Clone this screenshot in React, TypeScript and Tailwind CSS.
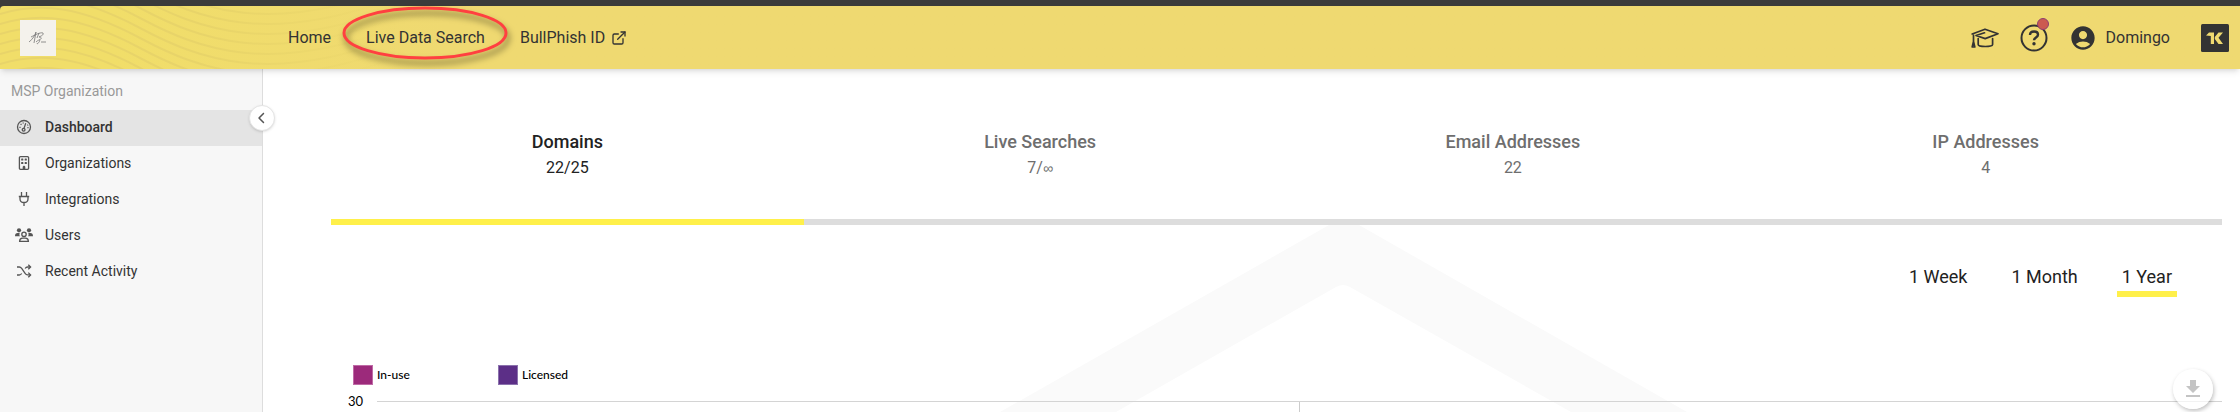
import React, { useState } from "react";
import { FaChevronLeft, FaRegBuilding } from "react-icons/fa6";
import { LuExternalLink } from "react-icons/lu";
import { MdAccountCircle, MdFileDownload } from "react-icons/md";

const waves = [-90, -80, -70, -60, -50, -40, -30, -20, -10, 0, 10, 20, 30, 40, 50, 60, 70, 80];

const DashboardIcon = () => (
	<svg width="16" height="16" viewBox="0 0 16 16" fill="none" stroke="currentColor" strokeWidth="1.3">
		<circle cx="8" cy="8" r="6.5" />
		<circle cx="7.6" cy="10.8" r="1.4" />
		<path d="M8 9.4 9.6 4.6" strokeLinecap="round" />
		<path d="M3.4 8.4h1.2M4.6 5l.9.8M7.2 3.4v1.100M11.400 6.400l.7-.5M11.400 8.600h1.200" />
	</svg>
);

const BuildingIcon = () => <FaRegBuilding className="size-[14px]" />;

const PlugIcon = () => (
	<svg width="16" height="16" viewBox="0 0 16 16" fill="none" stroke="currentColor" strokeWidth="1.3">
		<path d="M5.5 1V5M10.5 1V5M2.800 5.500h10.400M4 5.500V8c0 2.200 1.800 3.500 4 3.500s4-1.300 4-3.500V5.500M8 11.500v3.500" />
	</svg>
);

const UsersIcon = () => (
	<svg width="18" height="16" viewBox="0 0 18 16" fill="currentColor">
		<circle cx="4" cy="3.3" r="2.1" />
		<circle cx="14" cy="3.3" r="2.1" />
		<path d="M0 9.3c0-2 1-3.2 2.6-3.2h2.2c-.6 1.1-.5 2.3.1 3.2H0ZM18 9.3c0-2-1-3.2-2.6-3.2h-2.2c.6 1.1.5 2.3-.1 3.2H18Z" />
		<circle cx="9" cy="7.3" r="2.2" fill="none" stroke="currentColor" strokeWidth="1.3" />
		<path d="M4.6 14.4c0-2 1.2-3.2 3-3.2h2.8c1.8 0 3 1.2 3 3.2H4.6Z" fill="none" stroke="currentColor" strokeWidth="1.3" />
	</svg>
);

const ShuffleIcon = () => (
	<svg width="16" height="16" viewBox="0 0 16 16" fill="none" stroke="currentColor" strokeWidth="1.3">
		<path d="M1 4h2.3c1.2 0 1.7.5 2.4 1.4l3.4 5c.7 1 1.3 1.5 2.4 1.5H14M1 12h2.3c1.2 0 1.7-.5 2.4-1.5M9.1 5.5c.7-1 1.3-1.5 2.4-1.5H14" />
		<path d="m12.3 1.7 2.3 2.3-2.3 2.3M12.3 9.600l2.300 2.300-2.300 2.300" />
	</svg>
);

const GraduationIcon = () => (
	<svg width="28" height="20" viewBox="0 0 28 20" fill="none" stroke="currentColor" strokeWidth="1.7" strokeLinejoin="round" strokeLinecap="round">
		<path d="M1.200 6 14 1.200 27 5.800 14.200 10.600 5 7.500 13.500 4.800" />
		<path d="M7.200 10.500v6c0 1.300 3.200 2 7.200 2s7.200-.7 7.200-2v-6" />
		<path d="M2.500 7v6.500M2.500 13.500 1.200 19h2.600Z" />
	</svg>
);

const menu = [
	{ label: "Dashboard", icon: DashboardIcon },
	{ label: "Organizations", icon: BuildingIcon },
	{ label: "Integrations", icon: PlugIcon },
	{ label: "Users", icon: UsersIcon },
	{ label: "Recent Activity", icon: ShuffleIcon },
];

const stats = [
	{ label: "Domains", value: "22/25" },
	{ label: "Live Searches", value: "7/", unlimited: true },
	{ label: "Email Addresses", value: "22" },
	{ label: "IP Addresses", value: "4" },
];

const ranges = ["1 Week", "1 Month", "1 Year"];

const Header = () => (
	<header className="relative z-20 flex h-[63px] items-center rounded-tl-sm bg-linear-to-r from-[#f1de69] from-5% to-[#efd971] to-20% text-base text-[#333333] shadow-md">
		<svg className="absolute left-0 top-0" width="400" height="63" viewBox="0 0 400 63" fill="none" aria-hidden="true">
			<defs>
				<linearGradient id="wave-fade" gradientUnits="userSpaceOnUse" x1="0" y1="0" x2="400" y2="0">
					<stop offset="0.5" stopColor="#e8d469" />
					<stop offset="1" stopColor="#e8d469" stopOpacity="0" />
				</linearGradient>
			</defs>
			{waves.map((y) => (
				<path
					key={y}
					d={`M0 ${y + 8}C40 ${y - 4} 80 ${y} 140 ${y + 32}S270 ${y + 90} 400 ${y + 40}`}
					stroke="url(#wave-fade)"
					strokeWidth="2"
				/>
			))}
		</svg>
		<a href="#home" aria-label="Organization logo" className="relative ml-5 flex size-9 items-center justify-center bg-[#f4f2ec]">
			<svg width="20" height="16" viewBox="0 0 20 16" fill="none" stroke="#777777" strokeWidth="0.8">
				<path d="M1 12C5 9 7 5 8 2L6 13M3 7c4-2 9-5 12-4 1 2-2 3-4 4 3 0 3 2 0 3M11 3 9 8M8 12c3-3 5-2 3 0-1 2-2 2-2 1M13 12h5" />
			</svg>
		</a>
		<nav className="relative ml-[232px] flex items-center gap-[35px]">
			<a href="#home">Home</a>
			<a href="#search" className="relative">
				Live Data Search
				<svg className="absolute -left-6 -top-5 drop-shadow-[2px_5px_3px_rgba(0,0,0,0.5)]" width="166" height="54" viewBox="0 0 166 54" fill="none" aria-hidden="true">
					<ellipse cx="83" cy="27" rx="81" ry="25" stroke="#ff4040" strokeWidth="3" />
				</svg>
			</a>
			<a href="#bullphish" className="flex items-center gap-1.5">
				BullPhish ID <LuExternalLink className="size-4" />
			</a>
		</nav>
		<div className="ml-auto mr-[11px] flex items-center">
			<button type="button" aria-label="Training">
				<GraduationIcon />
			</button>
			<button type="button" aria-label="Help" className="relative ml-[21px]">
				<svg width="28" height="28" viewBox="0 0 28 28" fill="none" stroke="currentColor" strokeWidth="2">
					<circle cx="14" cy="14" r="12.5" />
					<path d="M10 11c0-2.500 1.700-3.500 4-3.500s4 1.200 4 3.200c0 2.800-4 2.800-4 5.600" strokeWidth="2.400" />
					<circle cx="14" cy="19.8" r="1.700" fill="currentColor" stroke="none" />
				</svg>
				<span className="absolute -right-px -top-1.5 size-3 rounded-full border border-[#8d3f70] bg-[#cc5a50]" />
			</button>
			<button type="button" className="ml-[21px] flex items-center gap-[9px]">
				<MdAccountCircle className="size-7" />
				Domingo
			</button>
			<button type="button" aria-label="Switch module" className="ml-[31px]">
				<svg width="28" height="28" viewBox="0 0 28 28">
					<rect width="28" height="28" rx="1.5" fill="#333333" />
					<path d="M5 11.500 8 8.500h5V20h-3.200v-8ZM13.800 13 17.500 8.500H22L17.500 13.800 22 20h-4.500L13.800 15Z" fill="#f0da70" />
				</svg>
			</button>
		</div>
	</header>
);

const Sidebar = () => (
	<aside className="relative z-10 w-[263px] shrink-0 border-r border-[#dddddd] bg-[#f7f7f7] text-sm text-[#333333]">
		<h2 className="flex h-[41px] items-center px-[11px] pt-0.5 text-[#999999]">MSP Organization</h2>
		<nav>
			{menu.map(({ label, icon: Icon }) => (
				<a
					key={label}
					href="#menu"
					className={`flex h-9 items-center pb-0.5 ${label === "Dashboard" ? "bg-[#e4e4e4] font-medium" : ""}`}
				>
					<span className="ml-[14px] mr-[11px] flex w-5 justify-center text-[#555555]">
						<Icon />
					</span>
					{label}
				</a>
			))}
		</nav>
		<button
			type="button"
			aria-label="Collapse menu"
			className="absolute -right-[13px] top-9 flex size-[26px] items-center justify-center rounded-full border border-[#e4e4e4] bg-white shadow-sm"
		>
			<FaChevronLeft className="size-3 text-[#555555]" />
		</button>
	</aside>
);

const App: React.FC = () => {
	const [range, setRange] = useState("1 Year");

	return (
		<div className="flex h-screen flex-col overflow-hidden bg-white font-[Roboto,sans-serif]">
			<div className="bg-[#3b3b3b] pt-1.5">
				<Header />
			</div>
			<div className="flex min-h-0 flex-1">
				<Sidebar />
				<main className="relative min-w-0 flex-1 overflow-hidden pl-[68px] pr-[18px] pt-[61px]">
					<section className="grid grid-cols-4">
						{stats.map((stat, i) => (
							<div
								key={stat.label}
								className={`flex flex-col items-center ${i === 0 ? "text-[#222222]" : "text-[#6e6e6e]"}`}
							>
								<h3 className="text-lg leading-6 font-medium">{stat.label}</h3>
								<p className="mt-0.5 text-base">
									{stat.value}
									{stat.unlimited && <span className="font-['Liberation_Sans',sans-serif] text-sm leading-none">∞</span>}
								</p>
							</div>
						))}
					</section>
					<div className="mt-[39px] h-1.5 bg-[#dddddd]">
						<div className="h-full w-1/4 bg-[#fff04a]" />
					</div>
					<div className="relative isolate">
						<svg className="absolute left-1/2 top-0 -z-10 -translate-x-1/2" width="822" height="187" viewBox="866 225 822 187" aria-hidden="true">
							<path d="M1329 225h30L1687 412H1571L1350 287q-7-4-14 0L1116 412H1000Z" fill="#fafafa" />
						</svg>
						<div className="flex justify-end gap-[34px] pr-[45px] pt-9 text-lg text-[#222222]">
							{ranges.map((item) => (
								<button
									key={item}
									type="button"
									onClick={() => setRange(item)}
									className={`h-9 border-b-6 px-[5px] pt-0.5 ${item === range ? "border-[#fff04a]" : "border-transparent"}`}
								>
									{item}
								</button>
							))}
						</div>
						<ul className="mt-[68px] flex pl-[22px] font-[Lato,sans-serif] text-xs font-medium text-black">
							<li className="flex w-[145px] items-center gap-1">
								<span className="size-5 border border-[#bf6ba6] bg-[#9c2a7b]" />
								In-use
							</li>
							<li className="flex items-center gap-1">
								<span className="size-5 border border-[#8b72ad] bg-[#5c2f87]" />
								Licensed
							</li>
						</ul>
						<div className="mt-2 flex items-start">
							<span className="w-[46px] pl-[17px] font-[Lato,sans-serif] text-[13px] leading-4">30</span>
							<div className="mt-2 flex h-20 flex-1 justify-evenly border-t border-[#d4d4d4]">
								<span className="w-px bg-[#cccccc]" />
							</div>
						</div>
					</div>
					<button
						type="button"
						aria-label="Download chart"
						className="absolute bottom-[3px] right-[27px] flex size-10 items-center justify-center rounded-full bg-white/70 text-[#c4c4c4] shadow-[1px_2px_4px_rgba(0,0,0,0.25)]"
					>
						<MdFileDownload className="size-6" />
					</button>
				</main>
			</div>
		</div>
	);
};

export default App;
